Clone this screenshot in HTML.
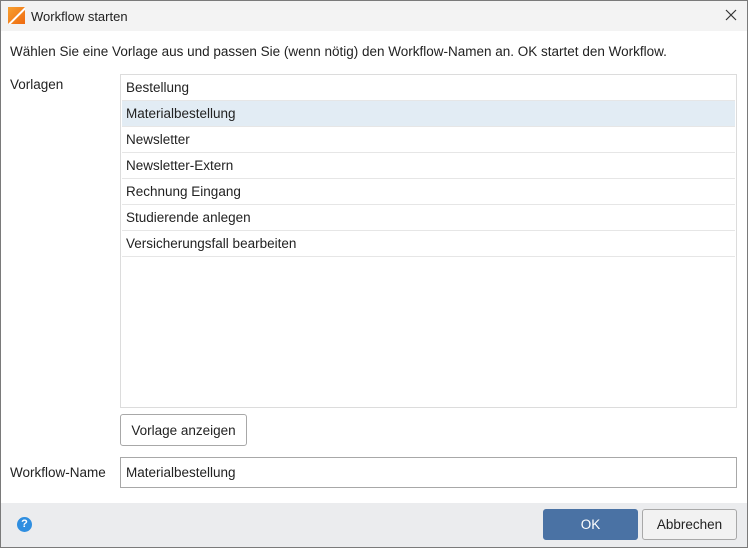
<!DOCTYPE html>
<html><head><style>
*{box-sizing:border-box;margin:0;padding:0}
body{width:748px;height:548px;font-family:"Liberation Sans",sans-serif;font-size:13.5px;color:#222;background:#fff;position:relative;overflow:hidden}
.win{position:absolute;left:0;top:0;width:748px;height:548px;border:1px solid #7a7a7a}
.c{position:absolute;left:-1px;top:-1px;width:748px;height:548px}
.title{position:absolute;left:1px;top:1px;width:746px;height:30px;background:#f3f3f3}
.abs{position:absolute;white-space:nowrap}
.list{position:absolute;left:120px;top:74px;width:617px;height:334px;border:1px solid #dcdcdc}
.row{height:26px;line-height:25px;padding-left:4px;border-bottom:1px solid #e6e6e6;margin:0 1px}
.sel{background:#e2ecf4}
.btn{position:absolute;border:1px solid #a8a8a8;border-radius:3px;background:#fff;text-align:center}
.footer{position:absolute;left:1px;top:503px;width:746px;height:44px;background:#ebecee}
</style></head><body><div class="win"><div class="c">
<div class="title">
<div class="abs" style="left:7px;top:6px;width:17px;height:17px;background:linear-gradient(135deg,#f7a030,#ef6a10);overflow:hidden"><div style="position:absolute;left:0;top:0;width:26px;height:2px;background:#fff;transform-origin:0 0;transform:translate(0px,17px) rotate(-45deg)"></div></div>
<div class="abs" style="left:30px;top:8px;font-size:13px">Workflow starten</div>
<svg class="abs" style="left:724px;top:8px" width="12" height="12" viewBox="0 0 12 12"><path d="M1 1L11 11M11 1L1 11" stroke="#333" stroke-width="1.2"/></svg>
</div>
<div class="abs" style="left:10px;top:44px">Wählen Sie eine Vorlage aus und passen Sie (wenn nötig) den Workflow-Namen an. OK startet den Workflow.</div>
<div class="abs" style="left:10px;top:77px">Vorlagen</div>
<div class="list">
<div class="row">Bestellung</div>
<div class="row sel">Materialbestellung</div>
<div class="row">Newsletter</div>
<div class="row">Newsletter-Extern</div>
<div class="row">Rechnung Eingang</div>
<div class="row">Studierende anlegen</div>
<div class="row">Versicherungsfall bearbeiten</div>
</div>
<div class="btn" style="left:120px;top:414px;width:127px;height:32px;line-height:31px">Vorlage anzeigen</div>
<div class="abs" style="left:10px;top:465px">Workflow-Name</div>
<div class="abs" style="left:120px;top:457px;width:617px;height:31px;border:1px solid #a8a8a8;padding-left:5px;line-height:30px">Materialbestellung</div>
<div class="footer">
<div class="abs" style="left:16px;top:14px;width:15px;height:15px;border-radius:50%;background:#2f8ee0;color:#fff;font-size:11px;font-weight:bold;text-align:center;line-height:15px">?</div>
<div class="btn" style="left:542px;top:6px;width:95px;height:31px;line-height:30px;background:#4a72a4;border-color:#4a72a4;color:#fff">OK</div>
<div class="btn" style="left:641px;top:6px;width:95px;height:31px;line-height:30px;background:#f2f2f2">Abbrechen</div>
</div>
</div></div></body></html>
